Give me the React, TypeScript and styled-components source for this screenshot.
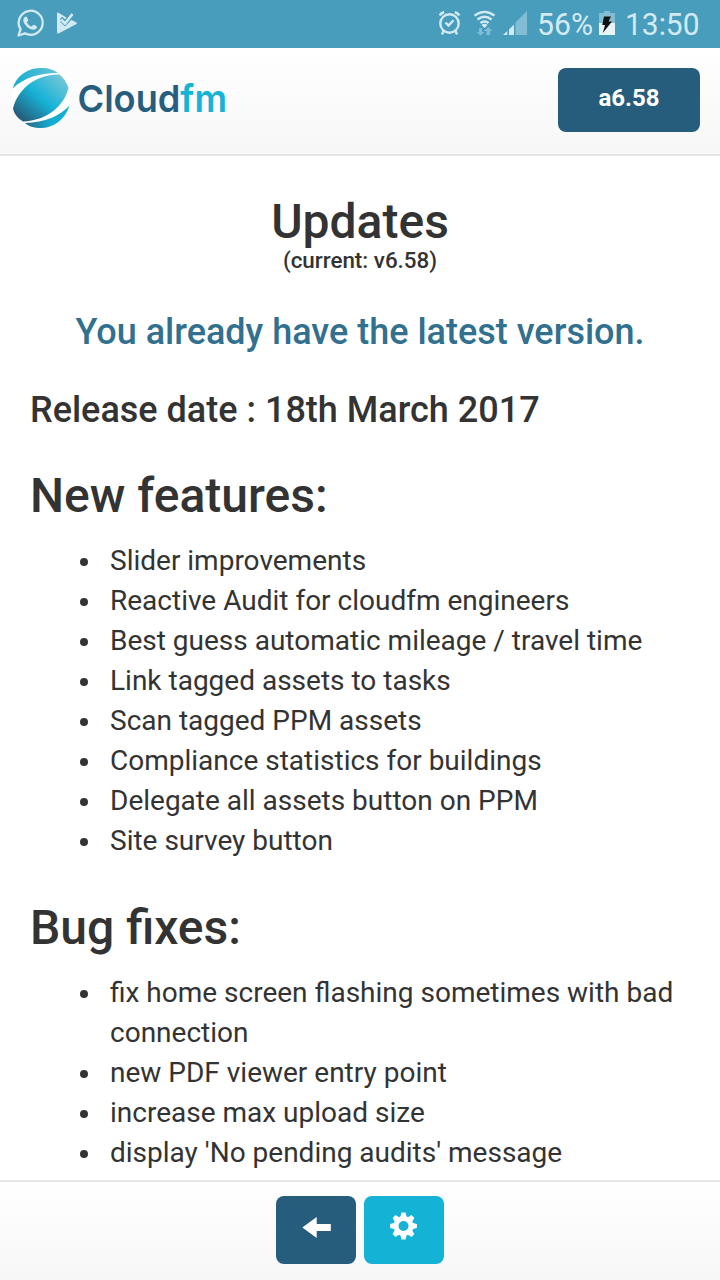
import React from "react";
import styled, { createGlobalStyle } from "styled-components";

const GlobalStyle = createGlobalStyle`
  * { box-sizing: border-box; }
  body {
    margin: 0;
    background: #fff;
    color: #333;
    font-family: Roboto, "Liberation Sans", sans-serif;
  }
`;

const Screen = styled.div`
  display: flex;
  flex-direction: column;
  width: 720px;
  height: 1280px;
  overflow: hidden;
`;

const StatusBar = styled.div`
  flex: none;
  display: flex;
  justify-content: space-between;
  height: 48px;
  background: #489dbd;
`;

const Clock = styled.svg`
  display: block;
  font-family: Roboto, sans-serif;
  font-size: 30.5px;
`;

const Header = styled.header`
  flex: none;
  display: flex;
  justify-content: space-between;
  align-items: flex-start;
  height: 108px;
  padding: 20px 20px 0 12px;
  border-bottom: 2px solid #e5e5e5;
  background: linear-gradient(#fff, #f7f7f7);
`;

const Logo = styled.svg`
  display: block;
  font-family: Inter, sans-serif;
  font-weight: 600;
  font-size: 37.5px;
`;

const VersionButton = styled.button`
  width: 142px;
  height: 64px;
  padding: 0 0 4px;
  border: 0;
  border-radius: 8px;
  background: #265d7c;
  color: #fff;
  font: 700 24px/28px Roboto, sans-serif;
`;

const Content = styled.main`
  flex: 1;
  min-height: 0;
  overflow: hidden;
  padding: 40px 30px 0;
`;

const Title = styled.h3<{ $center?: boolean }>`
  margin: 0;
  font-size: 48px;
  line-height: 52px;
  font-weight: 500;
  text-align: ${(p) => (p.$center ? "center" : "left")};
`;

const Current = styled.p`
  margin: 0 0 40px;
  font-size: 22.4px;
  line-height: 25px;
  font-weight: 500;
  text-align: center;
`;

const Message = styled.h4<{ $notice?: boolean }>`
  margin: 0 0 ${(p) => (p.$notice ? 40 : 41)}px;
  font-size: 36px;
  line-height: 38px;
  font-weight: 500;
  text-align: ${(p) => (p.$notice ? "center" : "left")};
  color: ${(p) => (p.$notice ? "#31708f" : "#333")};
`;

const List = styled.ul`
  margin: 19px 0 41px;
  padding: 0 0 0 80px;
  font-size: 28px;
  line-height: 40px;
  list-style: none;
`;

const Item = styled.li`
  &::before {
    content: "";
    display: inline-block;
    width: 8px;
    height: 8px;
    margin: 0 22px 0 -30px;
    border-radius: 50%;
    background: #333;
    vertical-align: 4px;
  }
`;

const Footer = styled.footer`
  flex: none;
  display: flex;
  justify-content: center;
  gap: 8px;
  height: 100px;
  padding-top: 14px;
  border-top: 2px solid #e5e5e5;
  background: linear-gradient(#fff, #f7f7f7);
`;

const NavButton = styled.button<{ $bright?: boolean }>`
  display: block;
  width: 80px;
  height: 68px;
  padding: 0;
  border: 0;
  border-radius: 8px;
  background: ${(p) => (p.$bright ? "#14b3d6" : "#265d7c")};
  svg { display: block; }
`;

const features = [
  "Slider improvements",
  "Reactive Audit for cloudfm engineers",
  "Best guess automatic mileage / travel time",
  "Link tagged assets to tasks",
  "Scan tagged PPM assets",
  "Compliance statistics for buildings",
  "Delegate all assets button on PPM",
  "Site survey button",
];

const fixes = [
  "fix home screen flashing sometimes with bad connection",
  "new PDF viewer entry point",
  "increase max upload size",
  "display 'No pending audits' message",
];

const teeth = [0, 45, 90, 135, 180, 225, 270, 315];

export default function App() {
  return (
    <>
      <GlobalStyle />
      <Screen>
        <StatusBar>
          <svg width="100" height="48" viewBox="0 0 100 48">
            <path d="M18.5 35.500 L20.600 29.200 A12 12 0 1 1 25 33.300 Z" fill="none" stroke="#d4eaf2" strokeWidth="2.300" strokeLinejoin="round" />
            <path d="M24.500 17.200c.7-.9 2-.9 2.500 0l1.300 2.800c.2.700-1.400 1.900-1.400 2.400 1 2 2.600 3.300 4.700 4.100.6 0 1.500-1.900 2.300-1.700l2.800 1.400c.6.500.1 2.100-.8 2.800-1.500 1.200-3.700.9-5.600 0-3-1.400-5.100-3.600-6.400-6.200-.9-2.100-.7-4.100.6-5.600z" fill="#d4eaf2" />
            <path d="M57 13.500 Q57 12 58.500 12.800 L66 17.200 L76.500 22.500 Q77.500 23.200 76.500 24 L58.500 33.500 Q57 34 57 32Z" fill="#d4eaf2" />
            <path d="M61 18 L65 22 L69 17.800 L73 13.500" fill="none" stroke="#489dbd" strokeWidth="3.500" />
            <path d="M60.800 21 L65 25 L73 16.500" fill="none" stroke="#489dbd" strokeWidth="2" />
            <path d="M61 19.500 L65 23.500 L72.500 14" fill="none" stroke="#d4eaf2" strokeWidth="2.800" />
          </svg>
          <Clock width="290" height="48" viewBox="430 0 290 48" fill="#d4eaf2">
            <g fill="none" stroke="#d4eaf2" strokeWidth="2.400">
              <circle cx="449.500" cy="23.500" r="9.200" />
              <path d="M439.800 15.500 Q441 12.800 444.200 12.200 M454.800 12.200 Q458 12.800 459.200 15.500 M443.500 31 L442 34.500 M455.500 31 L457 34.500 M445.500 22.500 L448.500 25.500 L453.500 20.200" />
            </g>
            <g fill="none" stroke="#d4eaf2" strokeWidth="2.300">
              <path d="M474.500 15.700 Q484.500 8 494.500 15.700 M477.500 19.500 Q484.500 14 491.500 19.500 M480.500 23 Q484.500 20 488.500 23" />
            </g>
            <path d="M481.500 25 Q484.500 22.500 487.500 25 L484.500 28 Z" />
            <path d="M479 28h3v4h2.500l-4 3.500-4-3.500h2.500z M486.500 35v-4H484l4.200-4 4.200 4H490v4z" opacity=".4" />
            <path d="M515.500 22.500 L527 11 V35 H515.500 Z" opacity=".42" />
            <path d="M503 35 L507.300 31 V35 Z M509 29.500 L514 24.500 V35 H509 Z" />
            <text x="537" y="34.500" textLength="56" lengthAdjust="spacingAndGlyphs">56%</text>
            <path d="M599 13h5v-2h6v2h5v10h-16z" opacity=".42" />
            <path d="M599 23h16v12h-16z" fill="#e7f4f8" />
            <path d="M604 16.500 L611 16.500 L608.500 21.500 H612 L602.800 33 L605 25 H602.300 Z" fill="#111" />
            <text x="625" y="34.500" textLength="74.500" lengthAdjust="spacingAndGlyphs">13:50</text>
          </Clock>
        </StatusBar>
        <Header>
          <Logo width="220" height="64" viewBox="12 68 220 64">
            <defs>
              <linearGradient id="ball" x1="0" y1="1" x2="1" y2="0">
                <stop offset=".08" stopColor="#285875" />
                <stop offset=".5" stopColor="#16b2d6" />
                <stop offset=".9" stopColor="#70c6d8" />
              </linearGradient>
              <linearGradient id="rimTop">
                <stop stopColor="#14aed2" />
                <stop offset="1" stopColor="#67c2d4" />
              </linearGradient>
              <linearGradient id="rimBottom">
                <stop stopColor="#286784" />
                <stop offset=".6" stopColor="#14aed2" />
              </linearGradient>
            </defs>
            <circle cx="41" cy="98" r="29.500" fill="#fff" />
            <path d="M12.500 88.500 C17 75 28 68 41 68 C49 68 54 70 58 73 C38 73 24 78 12.500 88.500Z" fill="url(#rimTop)" />
            <path d="M13 108.500 C17 91 34 74 59.500 74.500 C64 78 67 83 68.500 88 C64 106 47 120.500 23 121.500 C17 118 14 113 13 108.500Z" fill="url(#ball)" />
            <path d="M25 123 C45 122.500 60 116 69.500 105.500 C65 120 53 128 41 128 C34 128 28 126 25 123Z" fill="url(#rimBottom)" />
            <text x="77.500" y="112" textLength="149.500" lengthAdjust="spacingAndGlyphs" fill="#285e7d">
              Cloud<tspan fill="#15b4d6">fm</tspan>
            </text>
          </Logo>
          <VersionButton>a6.58</VersionButton>
        </Header>
        <Content>
          <Title $center>Updates</Title>
          <Current>(current: v6.58)</Current>
          <Message $notice>You already have the latest version.</Message>
          <Message>Release date : 18th March 2017</Message>
          <Title>New features:</Title>
          <List>{features.map((item) => <Item key={item}>{item}</Item>)}</List>
          <Title>Bug fixes:</Title>
          <List>{fixes.map((item) => <Item key={item}>{item}</Item>)}</List>
        </Content>
        <Footer>
          <NavButton aria-label="Back">
            <svg width="80" height="68" viewBox="0 0 80 68">
              <path d="M26.300 31.500 L40.700 21 V28 H54.800 V35 H40.700 V42 Z" fill="#fff" />
            </svg>
          </NavButton>
          <NavButton $bright aria-label="Settings">
            <svg width="80" height="68" viewBox="0 0 80 68">
              <g transform="translate(39.500 30)" fill="#fff">
                <circle r="7.500" fill="none" stroke="#fff" strokeWidth="5" />
                {teeth.map((angle) => (
                  <path key={angle} d="M-3.300 -8.500 L-2 -13.400 H2 L3.300 -8.500Z" transform={`rotate(${angle})`} />
                ))}
              </g>
            </svg>
          </NavButton>
        </Footer>
      </Screen>
    </>
  );
}
